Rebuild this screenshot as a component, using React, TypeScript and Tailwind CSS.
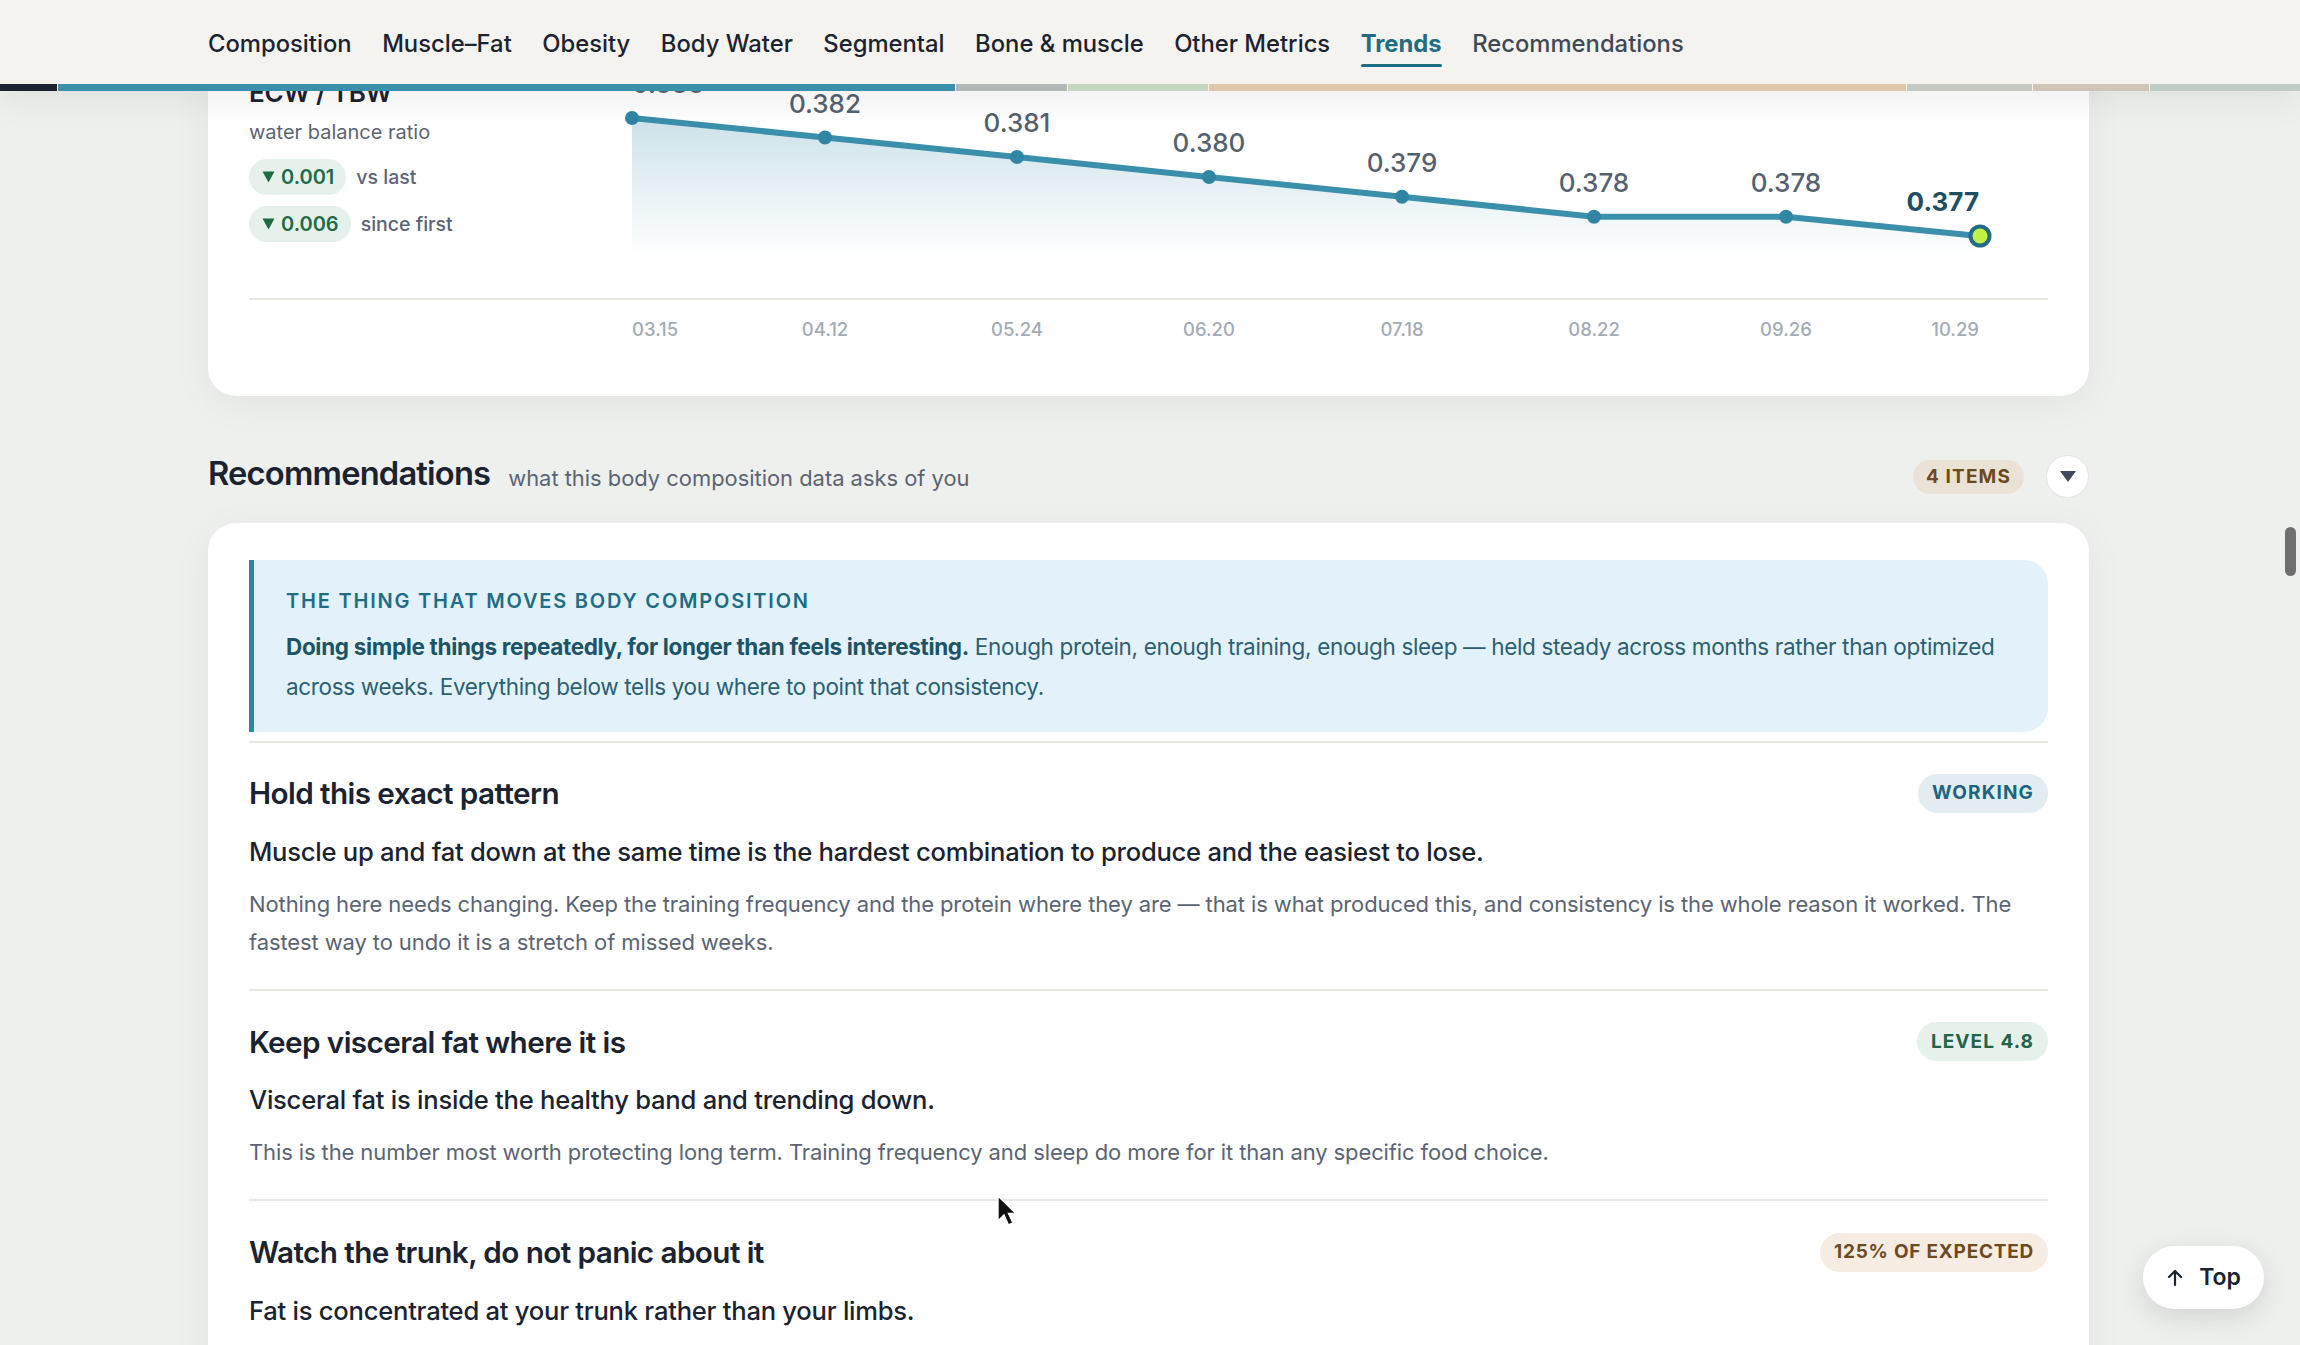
const tabs = ["Composition", "Muscle–Fat", "Obesity", "Body Water", "Segmental", "Bone & muscle", "Other Metrics", "Trends", "Recommendations"];

const progress = [
  { w: "w-[57px]", c: "bg-[#1c2330]" },
  { w: "w-[897px]", c: "bg-[#3a8fab]" },
  { w: "w-[111px]", c: "bg-[#b2b8b8]" },
  { w: "w-[140px]", c: "bg-[#c5d6c0]" },
  { w: "w-[697px]", c: "bg-[#dfc8aa]" },
  { w: "w-[125px]", c: "bg-[#c6c8c2]" },
  { w: "w-[116px]", c: "bg-[#d0c4b6]" },
  { w: "flex-1", c: "bg-[#bfcdc6]" },
];

const points = [
  { x: 0, y: 67, v: "0.383", d: "03.15" },
  { x: 193, y: 86.5, v: "0.382", d: "04.12" },
  { x: 385, y: 106, v: "0.381", d: "05.24" },
  { x: 577, y: 126, v: "0.380", d: "06.20" },
  { x: 770, y: 145.7, v: "0.379", d: "07.18" },
  { x: 962, y: 165.7, v: "0.378", d: "08.22" },
  { x: 1154, y: 165.7, v: "0.378", d: "09.26" },
  { x: 1347, y: 185, v: "0.377", d: "10.29" },
];

const line = points.map((p) => `${p.x},${p.y}`).join(" ");

function Chart() {
  return (
    <svg width="1416" height="247" viewBox="0 0 1416 247" className="overflow-visible shrink-0">
      <defs>
        <linearGradient id="area" x1="0" y1="67" x2="0" y2="205" gradientUnits="userSpaceOnUse">
          <stop offset="0" stopColor="#3a8fab" stopOpacity="0.26" />
          <stop offset="1" stopColor="#3a8fab" stopOpacity="0" />
        </linearGradient>
      </defs>
      <polygon points={`${line} 1347,205 0,205`} fill="url(#area)" />
      <polyline points={line} fill="none" stroke="#3a8fab" strokeWidth="6" strokeLinejoin="round" />
      {points.slice(0, -1).map((p) => (
        <circle key={p.d} cx={p.x} cy={p.y} r="7" fill="#2f86a4" />
      ))}
      <circle cx="1348" cy="185" r="9.5" fill="#c2f045" stroke="#256b85" strokeWidth="4" />
      {points.map((p, i) => (
        <text
          key={p.d}
          x={p.x}
          y={p.y - 25}
          textAnchor={i === 0 ? "start" : i === points.length - 1 ? "end" : "middle"}
          fontSize="26"
          fontWeight={i === points.length - 1 ? 700 : 500}
          fill={i === points.length - 1 ? "#1d4e63" : "#56616e"}
        >
          {p.v}
        </text>
      ))}
    </svg>
  );
}

function DateAxis() {
  return (
    <svg width="1416" height="60" viewBox="0 0 1416 60" className="block">
      {points.map((p, i) => (
        <text
          key={p.d}
          x={p.x}
          y="36"
          textAnchor={i === 0 ? "start" : i === points.length - 1 ? "end" : "middle"}
          fontSize="18.5"
          fontWeight={500}
          fill="#a3abb5"
        >
          {p.d}
        </text>
      ))}
    </svg>
  );
}

function Delta({ value, label }: { value: string; label: string }) {
  return (
    <div className="flex items-center gap-[10px]">
      <span className="flex h-[36px] items-center gap-[6px] rounded-full bg-[#e5f1ea] pl-[13px] pr-[12px] text-[20px] font-semibold text-[#226b48]">
        <svg width="13" height="12" viewBox="0 0 13 12">
          <path d="M0.5 0.5h12L6.5 11.5z" fill="#1f6b45" />
        </svg>
        {value}
      </span>
      <span className="mt-[1px] text-[19.5px] font-medium text-[#5b6472]">{label}</span>
    </div>
  );
}

function Pill({ text, tone }: { text: string; tone: string }) {
  return (
    <span className={`flex h-[39px] shrink-0 items-center rounded-full px-[14px] text-[19px] font-bold ${tone}`}>
      {text}
    </span>
  );
}

function Rec({ title, pill, tone, lead, body, last }: { title: string; pill: string; tone: string; lead: string; body?: string; last?: boolean }) {
  return (
    <div className={`pt-[29px] ${last ? "" : "pb-[28px] border-b-2 border-[#e9e7e2]"}`}>
      <div className="flex items-center justify-between">
        <h3 className="text-[29.7px] leading-[44.5px] font-semibold tracking-[-0.02em] text-[#1c2330]">{title}</h3>
        <Pill text={pill} tone={tone} />
      </div>
      <p className="mt-[18px] text-[25.6px] leading-[36px] font-medium tracking-[-0.01em] text-[#1c2330]">{lead}</p>
      {body && <p className="mt-[15px] text-[22px] leading-[38px] tracking-[-0.005em] text-[#5b6472]">{body}</p>}
    </div>
  );
}

export default function App() {
  return (
    <div className="relative h-screen overflow-hidden bg-[#eef0ee] font-['Inter',sans-serif]">
      <header className="relative z-10 shadow-[0_8px_36px_rgba(0,0,0,0.07)]">
        <nav className="flex h-[84px] items-center gap-[30.5px] bg-[#f5f3ef] pl-[208px] pt-[4px]">
          {tabs.map((t) => (
            <a
              key={t}
              className={`relative text-[23.8px] ${
                t === "Trends"
                  ? "font-bold text-[#1f6d85]"
                  : t === "Recommendations"
                    ? "font-medium text-[#3f4a58]"
                    : "font-medium text-[#1c2330]"
              }`}
            >
              {t}
              {t === "Trends" && <span className="absolute inset-x-0 -bottom-[5px] h-[3px] rounded-full bg-[#1f6d85]" />}
            </a>
          ))}
        </nav>
        <div className="flex h-[7px] gap-[1px] bg-[#f5f3ef]">
          {progress.map((s, i) => (
            <div key={i} className={`${s.w} ${s.c}`} />
          ))}
        </div>
      </header>

      <main className="ml-[208px] w-[1881px]">
        <section className="-mt-[40px] h-[345px] rounded-[28px] bg-white px-[41px] shadow-[0_8px_40px_rgba(0,0,0,0.05)]">
          <div className="flex h-[247px]">
            <div className="w-[383px] shrink-0 pt-[28px]">
              <h3 className="text-[26px] leading-[28px] font-semibold tracking-[-0.01em] text-[#1c2330]">ECW / TBW</h3>
              <p className="mt-[11px] text-[20px] leading-[28px] text-[#5b6472]">water balance ratio</p>
              <div className="mt-[13px] flex flex-col gap-[11px]">
                <Delta value="0.001" label="vs last" />
                <Delta value="0.006" label="since first" />
              </div>
            </div>
            <Chart />
          </div>
          <div className="border-t-2 border-[#e9e7e2] pl-[383px]">
            <DateAxis />
          </div>
        </section>

        <div className="mt-[59px] flex h-[43px] items-center">
          <h2 className="mb-[8px] text-[32.7px] leading-[40px] font-semibold tracking-[-0.025em] text-[#1c2330]">Recommendations</h2>
          <span className="ml-[18px] mt-[2px] text-[21.9px] leading-[30px] text-[#5b6472]">what this body composition data asks of you</span>
          <span className="ml-auto mt-[1px] flex h-[34px] items-center rounded-full bg-[#eae2d5] px-[13px] text-[19px] font-bold tracking-[0.06em] text-[#6b4a1d]">4 ITEMS</span>
          <button className="ml-[22px] flex h-[43px] w-[43px] items-center justify-center rounded-full border border-[#e6e3dd] bg-white">
            <svg width="16" height="11" viewBox="0 0 16 11">
              <path d="M0 0h16L8 11z" fill="#3f4a5a" />
            </svg>
          </button>
        </div>

        <section className="mt-[25px] rounded-[28px] bg-white px-[41px] pb-[90px] pt-[37px] shadow-[0_8px_40px_rgba(0,0,0,0.05)]">
          <div className="h-[172px] rounded-r-[24px] border-l-[5px] border-[#2f86a4] bg-[#e3f2fa] pl-[32px] pr-[30px] pt-[28px]">
            <p className="text-[20px] leading-[26px] font-semibold tracking-[0.09em] text-[#1f6d85]">THE THING THAT MOVES BODY COMPOSITION</p>
            <p className="mt-[13px] text-[22.5px] leading-[39.5px] tracking-[-0.015em] text-[#2b5f72]">
              <b className="font-bold text-[#1b5467]">Doing simple things repeatedly, for longer than feels interesting.</b> Enough protein, enough training, enough sleep — held steady across months rather than optimized across weeks. Everything below tells you where to point that consistency.
            </p>
          </div>
          <div className="mt-[9px] border-t-2 border-[#e9e7e2]" />
          <div className="-mt-[1px]">
            <Rec
              title="Hold this exact pattern"
              pill="WORKING"
              tone="bg-[#e2ecf1] text-[#1e6480] tracking-[0.06em]"
              lead="Muscle up and fat down at the same time is the hardest combination to produce and the easiest to lose."
              body="Nothing here needs changing. Keep the training frequency and the protein where they are — that is what produced this, and consistency is the whole reason it worked. The fastest way to undo it is a stretch of missed weeks."
            />
            <Rec
              title="Keep visceral fat where it is"
              pill="LEVEL 4.8"
              tone="bg-[#e5f1ea] text-[#22634a] tracking-[0.055em]"
              lead="Visceral fat is inside the healthy band and trending down."
              body="This is the number most worth protecting long term. Training frequency and sleep do more for it than any specific food choice."
            />
            <Rec
              title="Watch the trunk, do not panic about it"
              pill="125% OF EXPECTED"
              tone="bg-[#f6ece1] text-[#6e4a1f] tracking-[0.04em]"
              lead="Fat is concentrated at your trunk rather than your limbs."
              last
            />
          </div>
        </section>
      </main>

      <div className="absolute left-[2285px] top-[527px] h-[49px] w-[11px] rounded-full bg-[#6f6f6f]" />

      <button className="absolute left-[2143px] top-[1246px] flex h-[63px] w-[121px] items-center justify-center gap-[15px] rounded-full bg-white text-[23px] font-semibold text-[#1c2330] shadow-[0_8px_28px_rgba(0,0,0,0.12)]">
        <svg width="18" height="18" viewBox="0 0 18 18" fill="none" stroke="#1c2330" strokeWidth="2.2" strokeLinecap="round" strokeLinejoin="round">
          <path d="M9 16V2M3 8l6-6 6 6" />
        </svg>
        Top
      </button>

      <svg className="absolute left-[996px] top-[1194px] z-20" width="22" height="34" viewBox="0 0 22 34">
        <path d="M2 2v25l6-6 4.5 10 4.5-2-4.5-9.5H20z" fill="#111" stroke="#fff" strokeWidth="1.4" />
      </svg>
    </div>
  );
}
